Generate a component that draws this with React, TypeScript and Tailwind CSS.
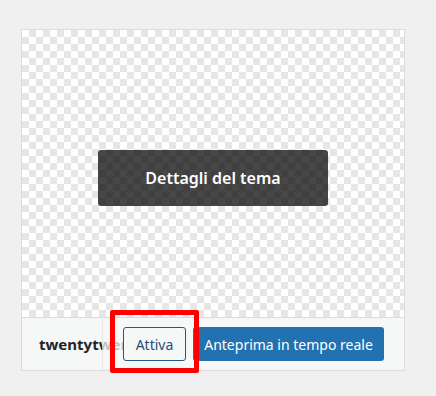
import React from "react";

export default function App() {
  return (
    <div className="w-[436px] h-[396px] bg-[#f0f0f1] pt-[29px] pl-[21px] font-['Noto_Sans',sans-serif]">
      <div className="w-[384px] border border-[#dcdcde] bg-white flex flex-col">
        <div className="relative h-[287px] bg-[conic-gradient(#e6e6e6_25%,#ffffff_0_50%,#e6e6e6_0_75%,#ffffff_0)] bg-[length:14px_14px]">
          <div className="absolute left-[76px] top-[120px] w-[230px] h-[56px] rounded-[3px] bg-[rgba(0,0,0,0.72)] flex items-center justify-center text-white text-[16px] font-semibold">
            Dettagli del tema
          </div>
        </div>
        <div className="relative h-[53px] border-t border-[#dcdcde] bg-[#f6f7f7] flex items-center pl-[17px]">
          <div className="w-[300px] overflow-hidden whitespace-nowrap">
            <span className="text-[15px] font-bold text-[#1d2327]">twentytwentythree</span>
          </div>
          <div className="absolute right-0 top-0 bottom-0 w-[302px] border-l border-[rgba(0,0,0,0.06)] bg-[rgba(246,247,247,0.75)] flex items-center px-[20px] gap-[7px]">
            <div className="relative">
              <button className="h-[34px] w-[63px] rounded-[3px] border border-[#1f5a8a] bg-[#f6f7f7] text-[#1f4f7a] text-[14px] flex items-center justify-center">
                Attiva
              </button>
              <div className="absolute left-[-13px] top-[-17px] w-[89px] h-[63px] border-[5px] border-[#ff0000] rounded-[2px] pointer-events-none z-10"></div>
            </div>
            <button className="h-[34px] w-[191px] rounded-[3px] bg-[#2271b1] text-white text-[14px] flex items-center justify-center whitespace-nowrap">
              Anteprima in tempo reale
            </button>
          </div>
        </div>
      </div>
    </div>
  );
}
